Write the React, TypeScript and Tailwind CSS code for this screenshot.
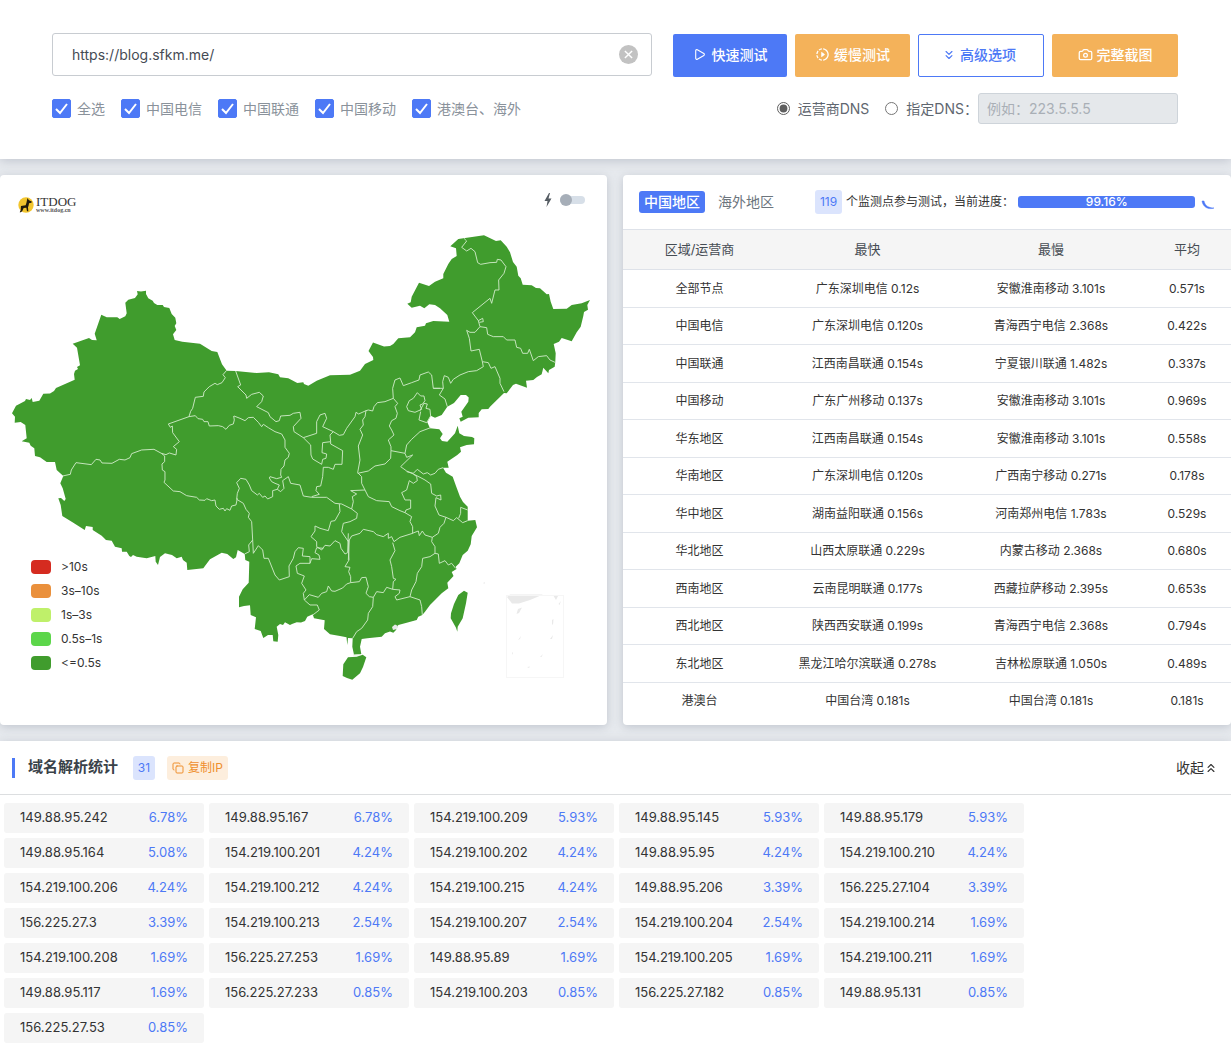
import React, { useState } from 'react';
import { Camera, ChevronsDown, ChevronsUp, Copy, Play } from 'lucide-react';
import { MdOutlineSlowMotionVideo } from 'react-icons/md';
import { clsx } from 'clsx';

// =============================================================================
// DATA
// =============================================================================

interface SpeedRow {
  area: string;
  fastest: string;
  slowest: string;
  average: string;
}

const LINES = ['全选', '中国电信', '中国联通', '中国移动', '港澳台、海外'];

const SPEED_ROWS: SpeedRow[] = [
  { area: '全部节点', fastest: '广东深圳电信 0.12s', slowest: '安徽淮南移动 3.101s', average: '0.571s' },
  { area: '中国电信', fastest: '广东深圳电信 0.120s', slowest: '青海西宁电信 2.368s', average: '0.422s' },
  { area: '中国联通', fastest: '江西南昌联通 0.154s', slowest: '宁夏银川联通 1.482s', average: '0.337s' },
  { area: '中国移动', fastest: '广东广州移动 0.137s', slowest: '安徽淮南移动 3.101s', average: '0.969s' },
  { area: '华东地区', fastest: '江西南昌联通 0.154s', slowest: '安徽淮南移动 3.101s', average: '0.558s' },
  { area: '华南地区', fastest: '广东深圳电信 0.120s', slowest: '广西南宁移动 0.271s', average: '0.178s' },
  { area: '华中地区', fastest: '湖南益阳联通 0.156s', slowest: '河南郑州电信 1.783s', average: '0.529s' },
  { area: '华北地区', fastest: '山西太原联通 0.229s', slowest: '内蒙古移动 2.368s', average: '0.680s' },
  { area: '西南地区', fastest: '云南昆明联通 0.177s', slowest: '西藏拉萨移动 2.395s', average: '0.653s' },
  { area: '西北地区', fastest: '陕西西安联通 0.199s', slowest: '青海西宁电信 2.368s', average: '0.794s' },
  { area: '东北地区', fastest: '黑龙江哈尔滨联通 0.278s', slowest: '吉林松原联通 1.050s', average: '0.489s' },
  { area: '港澳台', fastest: '中国台湾 0.181s', slowest: '中国台湾 0.181s', average: '0.181s' },
];

const IP_STATS: [string, string][] = [
  ['149.88.95.242', '6.78%'], ['149.88.95.167', '6.78%'], ['154.219.100.209', '5.93%'], ['149.88.95.145', '5.93%'], ['149.88.95.179', '5.93%'],
  ['149.88.95.164', '5.08%'], ['154.219.100.201', '4.24%'], ['154.219.100.202', '4.24%'], ['149.88.95.95', '4.24%'], ['154.219.100.210', '4.24%'],
  ['154.219.100.206', '4.24%'], ['154.219.100.212', '4.24%'], ['154.219.100.215', '4.24%'], ['149.88.95.206', '3.39%'], ['156.225.27.104', '3.39%'],
  ['156.225.27.3', '3.39%'], ['154.219.100.213', '2.54%'], ['154.219.100.207', '2.54%'], ['154.219.100.204', '2.54%'], ['154.219.100.214', '1.69%'],
  ['154.219.100.208', '1.69%'], ['156.225.27.253', '1.69%'], ['149.88.95.89', '1.69%'], ['154.219.100.205', '1.69%'], ['154.219.100.211', '1.69%'],
  ['149.88.95.117', '1.69%'], ['156.225.27.233', '0.85%'], ['154.219.100.203', '0.85%'], ['156.225.27.182', '0.85%'], ['149.88.95.131', '0.85%'],
  ['156.225.27.53', '0.85%'],
];

const LEGEND = [
  { label: '>10s', color: 'bg-[#d52b20]' },
  { label: '3s–10s', color: 'bg-[#ea903c]' },
  { label: '1s–3s', color: 'bg-[#bff06a]' },
  { label: '0.5s–1s', color: 'bg-[#5cd64a]' },
  { label: '<=0.5s', color: 'bg-[#409c2d]' },
];

// =============================================================================
// MAP
// =============================================================================

const MAINLAND =
  '12,413.3 16,405.7 25,401 26,399 30,400 31.7,398 32.7,402 39.3,400.7 43.3,393.7 50,393.5 54,391 56,388 74.7,379.7 74,374 75,370.7 78,369 77,367 80,365.3 77,347.7 72.7,343.7 89,338 92,340 96.7,340.3 94.7,333.7 101.3,314.7 106.7,317.3 117.3,317.3 119.7,319 125.3,316.3 126.7,313.3 125.3,302.7 128.3,299.7 135,298 137.7,294.3 137,291 141,291.5 146,290.7 146,294 148.3,298.3 152.7,300.7 154,303 157.3,305 162.7,305 164,307 169.3,308 171.7,314 175.3,317.7 176.3,323.3 174.7,326 176.3,330 173,334.3 174.7,340 182.3,341.7 200,343.7 211.7,351 217.3,352 222,364.3 226.7,370.7 235.7,371 256.7,373 269,372.3 278.3,374.3 280,377.3 288.3,378.3 297.3,383 303.3,382.3 304,384 308.3,385.7 316.7,380.7 330,375.3 350,374.7 360,370.7 365,364 373.3,360 373,357 368.5,351 373,342.5 384,346.5 390,346 393.3,344 398.3,338.3 410,337.3 415,332.3 416.7,327.3 425,325.7 426,323.3 433.3,321 449.3,321.7 447.3,315 440,308.3 435,305 429.3,304.3 424.3,308.3 420,305.7 411.7,307.7 407.3,303.7 410.7,302.3 411.7,296.7 419,282.7 429,286 435,281.7 443.3,278.3 443.3,274 448.3,264 451.7,259 456.7,256 456,248.3 450.3,246.3 458.3,239 484,235.3 496,241 500.7,240.3 506.7,246.7 510,252.3 513,262 516.7,266.7 518.3,275.7 520.7,278.3 522.7,284.7 531.7,285.3 536,288 540,288.3 546.7,294.3 549,294 550.7,301.7 553.3,309 566.7,308.7 571.7,305 581.7,303.3 590,300 587.3,305 588,309.7 584,312 583.3,316 580.7,326.7 576.7,332.3 571.7,341.3 561.7,338 559,341.7 553.7,344 555.7,353.3 555.3,361.7 554.7,366.7 549,370 548.3,373.3 543.3,367.7 541.7,374.3 537,377 533.3,380 526,380.7 527,387.7 516,383.7 513,385 506.7,393.3 504,393 490,406.7 488.3,409 481.7,409.3 478.7,413 478.7,417.3 468.3,417.7 460.7,421.7 459.3,418.3 462.7,416.7 461.3,411.7 468.3,401.7 468.7,397.5 466,395 460.7,395 454,403 447.3,406.7 441.7,415 435,417.7 430.7,415.7 427.3,422.3 430,428.3 439.3,429.3 442.7,434 440,438.3 442,441 447.3,441.7 455,433.3 457.7,425.7 459.3,433.3 464,436 472,437 474.3,438.3 474,444.3 466.7,445 460,447.3 461,451.7 457.3,455 447.3,461.7 448.7,467.7 443,467.7 446,472.7 452.7,476.7 456,486 460,496.7 463,502 467.7,506.7 467.7,520.7 475.3,520 477,527.3 471.7,536 470.7,544.3 467.7,550.7 462.7,555 459.3,563.3 455.7,566.7 456.5,569 451.7,572 453.5,576 447.3,582.7 448.3,588.3 441.7,593.3 430,605 425,611.7 422.3,615 418.3,616.7 416.7,620 406.7,622.7 398.3,625 396,630 393.3,632.7 390,631.5 385,633.3 381.7,636.7 367.3,638.3 361.7,639 360,646.7 361.3,654 354,654.7 352.3,646.7 352.7,638.3 348,638 347.3,645 346.5,637.3 340,636 330,634.3 324,629 324.7,620.3 314,618.3 312.7,614.3 307.3,616.7 305,621 301,622.5 296.7,622.3 292,624 290,625 285,622.3 283,625 280,624 276.7,626.7 278.3,635 277.7,641.7 273.3,641.3 272.7,635 268,635 263.3,638 260.7,631 254.7,629 256,617.3 250.7,615 250,605.3 244,606 239,607.3 239,596.7 242.7,589.3 248.7,582.7 249.3,561.7 245.3,560 244.7,554 237.7,550 236,557.3 233.3,559 227.3,554 221.7,552.7 210,559.3 203.3,568.3 187.3,570 186.7,562.7 183,560 181.7,556.7 176.7,558.3 172,555 165,553.3 160,557 158,565 155.7,561.7 155.3,556 146.7,558.3 136.7,556.7 133,555 131,557 129.3,556 126.7,551.7 122,551.7 121.7,548.3 115,546.7 111.7,540.7 106,540 101.7,535.7 92.7,530 92.7,527 86,526 84.7,530 71.7,521.7 62.3,516 60.7,505 58.3,498.3 61,498 64.3,501 65.7,499 62.7,488.3 60.3,483.3 63.3,476 56.7,470 55,462 46.7,462 40,457.3 35,456 34.3,448.3 30.7,445.7 29.3,442.7 21.7,441.3 26.7,438.3 25.3,425 20.7,422 14.7,422.7 15,416.7';

const HAINAN = '343.3,664.3 348,657.3 356.7,656.7 362.7,654.7 366.3,657.3 363,667 360,673.3 352.3,679.7 347,678 342.7,676';

const TAIWAN = '451,613.3 454,604 458.3,595 464,590.7 467.7,592.7 466,603.3 462.7,618.3 457.7,626.7 457.3,631.7 456,627.7 450.7,618.3';

// Province borders, drawn at three times the map scale from each group's origin
const BORDERS = [
  {
    origin: 'translate(0 280) scale(0.3333)',
    lines: [
      '680,271 669,284 676,293 666,308 652,314 645,310 628,320 612,336 610,349 586,352 578,385 572,394 567,410',
      '567,410 505,432 511,442 517,438 518,458 538,485 520,500 530,508 528,525 508,519 498,524 484,520 462,508 425,510 395,521 390,533 375,540 358,538 336,550 306,549 300,540 288,538 274,554 228,548 214,570 211,583 188,588',
      '567,410 586,407 594,416 608,418 612,425 624,425 628,438 655,437 668,440 678,448 688,436 700,432 703,420 701,408',
      '484,520 494,528 494,545 486,552 487,570 495,575 495,600',
    ],
  },
  {
    origin: 'translate(30 450) scale(0.3333)',
    lines: [
      '405,90 402,97 430,123 450,125 470,137 500,142 508,150 525,151 530,146 545,152 555,150 558,168 568,178 580,175 585,183 590,176 600,181 605,168 618,165 622,145',
    ],
  },
  {
    origin: 'translate(220 360) scale(0.3333)',
    lines: [
      '42,168 60,175 75,182 85,173 100,172 115,187 125,200 130,193 145,203 165,215 185,222 195,240 195,262 208,280 205,292 195,300 192,318 183,328 182,345 185,352 170,356 150,350 148,354 155,365 165,370 178,375 172,388 158,392 158,410 143,417 135,408 128,412 118,400 112,405 95,392 88,375 78,358 62,355 50,368 58,385 52,400 50,418',
      '50,418 70,430 78,448 88,460 85,472 95,485 98,540 100,580',
      '47,33 62,75 53,80 78,105 80,115 95,103 118,97 130,108 125,125 110,140 145,158 150,170 168,185 178,182 182,168 210,166 220,160 240,157 243,175 220,200 222,215 250,233',
      '250,233 290,220 290,185 300,165 315,160 320,175 308,200 340,215 330,225 332,245 308,248 306,278 320,282 318,295 308,298 305,313 278,297 273,285 272,255 250,233',
      '340,215 358,226 370,224 380,205 405,170 408,157 416,162 438,152',
      '332,245 332,252 368,272 366,313 345,313 340,328 325,322 310,322 308,350 302,378 290,380 288,392 298,403 275,410',
      '172,388 182,395 192,385 188,362 205,350 212,370 240,375 250,408 275,412 320,412 345,430 365,432',
      '438,152 435,170 428,180 430,195 420,208 428,225 415,258 420,300 413,338',
      '438,152 445,150 458,153 462,140 472,128 495,125 520,115',
      '520,115 533,130 525,140 532,160 528,175 515,182 508,198 515,210 522,225 505,240 513,260 513,272',
      '513,272 512,295 495,312 465,318 445,333 413,340',
      '513,272 555,280 560,255 575,238 600,215 632,203',
      '555,280 560,292 578,285 542,320 560,333 580,342',
      '413,338 425,350 425,370 435,390 445,410 470,422 508,425 515,440 540,452 555,458',
      '435,390 392,392 410,402 397,410 400,425 395,447',
      '365,432 395,447 412,460 410,475 390,485 370,490 365,515 385,545',
      '358,432 360,455 345,482 333,484 325,512 300,505 285,498 285,513 273,530 290,545 290,560 305,570 315,556 330,558 345,542 360,550 363,565 375,582 383,578 385,520',
      '520,115 518,85 525,60 540,54 550,77 575,68 597,60 600,45 625,36 635,45 640,85 660,85',
      '560,140 568,122 580,115 592,98 602,108 612,108 615,122 608,132 600,135 605,148 585,157 565,152 560,140',
      '600,152 612,130 622,132 618,145 630,148 632,168 620,188 597,180 602,155',
      '555,458 575,470 570,485 578,500 578,520',
      '580,342 590,350 592,362 580,370 568,362 560,390 545,398 555,420 572,420 572,445 558,450 555,458',
      '385,600 388,540 395,528 420,520 430,508 460,515 470,524 490,530 505,520 505,535 515,530 522,545 540,532 578,520',
    ],
  },
  {
    origin: 'translate(390 225) scale(0.3333)',
    lines: [
      '222,40 230,48 215,67 230,78 243,70 255,80 263,113 272,118 300,113 320,112 322,103 333,105 348,125 342,145 326,165 327,195 315,195 305,235 300,220 247,263 265,287 270,305',
      '265,287 278,280 280,290 268,292',
      '270,305 255,322 240,322 230,316 238,340 243,378 268,373 277,410',
      '270,305 290,308 293,328 310,335 340,335 350,345 375,345 380,367 392,370 398,385 413,385 418,373 430,407 445,395 470,392 480,405 495,412',
      '277,410 295,413 303,430 315,425 330,460 330,475 342,500',
      '277,410 280,425 260,437 235,440 210,450 190,463 182,475 175,457 163,452 158,470 160,490 148,510 165,522 172,545',
      '130,490 160,490',
    ],
  },
  {
    origin: 'translate(340 400) scale(0.3333)',
    lines: [
      '200,215 220,220 232,208 250,222 262,218 272,225 285,220 295,208 309,203',
      '220,222 240,232 255,240 272,252 275,280 290,288 302,285 303,300 288,293 285,318 297,345 318,352',
      '318,352 340,362 350,353 368,368 383,362',
      '356,355 362,340 362,322 383,330',
      '318,352 312,370 300,382 295,400 277,412',
      '217,400 235,393 238,407 247,393 255,405 277,412 275,425 285,440 285,460',
      '285,460 295,462 298,490 315,482 325,495 335,490 347,505',
      '285,460 270,470 248,475 245,500 232,520 228,545 215,570 210,590',
      '210,590 240,600 245,620 247,645',
      '158,428 165,452 150,480 155,500 160,535 168,538 160,545 158,568',
      '158,568 180,570 178,580 165,590 170,600 210,590',
      '158,568 140,562 130,578 110,575 100,592',
      '100,592 98,620 85,640 83,660 65,685 50,695 38,715',
      '100,592 88,590 78,580 85,560 78,532 65,533 58,545 32,548',
      '25,420 27,480 15,500 30,502 26,515 32,530 32,548',
      '40,765 62,764',
    ],
  },
  {
    origin: 'translate(220 480) scale(0.3333)',
    lines: [
      '392,308 380,312 368,324 345,334 335,333 325,318 320,335 305,340 295,352 268,344 253,360',
      '253,360 270,375 292,375 298,390 285,400 278,405',
      '253,360 250,340 258,330 245,310 253,288 232,280 228,258 240,250 270,250',
      '270,250 275,236 300,238 297,225 285,218 290,203 310,205',
      '100,220 115,197 128,210 132,235 145,235 165,285 178,300 208,290 207,258 220,235 225,215 235,203 250,205 247,228 270,230 270,250',
      '98,180 86,195 88,215 74,222',
    ],
  },
];

function ChinaMap() {
  return (
    <svg viewBox="0 175 607 550" className="block w-full" role="img" aria-label="中国地区">
      <g fill="#409c2d">
        <polygon points={MAINLAND} />
        <polygon points={HAINAN} />
        <polygon points={TAIWAN} />
      </g>
      <g fill="none" stroke="#cdeac6" strokeWidth="2.8" strokeLinejoin="round">
        {BORDERS.map((group) => (
          <g key={group.origin} transform={group.origin}>
            {group.lines.map((points) => (
              <polyline key={points} points={points} />
            ))}
          </g>
        ))}
      </g>
      {/* Hong Kong and the islands inset */}
      <g fill="#e9e9e9">
        <polygon points="392,627 395,624.5 398,626 397,629 393,630" />
        <polygon points="483,583 485,582 484.5,584" />
        <polygon points="507,597 510,594.5 543,594.5 530,600 519,603.5 512,603.5" />
        <polygon points="553,595 558.5,595 556,600" />
        <polygon points="518,609 522,607.5 519,613 516.5,614" />
        <polygon points="552,620 553.5,619 553,625 552,624" />
        <polygon points="550,639 553,635 552,639" />
        <polygon points="518,640 521,636 520,639" />
        <polygon points="512,653 513,652 513,655" />
        <polygon points="540,657 543,654 541.5,657" />
        <polygon points="527,667 530,666.5 529,668" />
        <polygon points="558.5,604 561,601 559.5,605" />
      </g>
      <rect x="506.5" y="595.5" width="57" height="82" fill="none" stroke="#f6f6f6" />
    </svg>
  );
}

function Logo() {
  return (
    <div className="flex items-center gap-[2px]">
      <svg viewBox="0 0 48 48" className="h-4 w-4">
        <circle cx="24" cy="24" r="23" fill="#f2c52e" />
        <path
          d="M29 3l3 6 10 5-2 3-7 2c-1 5-1 8-3 12l1 12h-4l-2-11-8 1-4 9-4 4H5l3-6c1-4 0-8 1-13l14-2c2-5 3-11 4-16z"
          fill="#211b0c"
        />
      </svg>
      <div className="flex flex-col text-[#333]">
        <span className="font-['Liberation_Serif',serif] text-[13px] leading-[12px]">ITDOG</span>
        <span className="font-['Liberation_Serif',serif] text-[6px] leading-[5px] font-bold text-[#555]">www.itdog.cn</span>
      </div>
    </div>
  );
}

// =============================================================================
// FORM
// =============================================================================

function LineCheckbox({ label }: { label: string }) {
  return (
    <label className="flex items-center gap-[6px] text-sm text-[#8a929b]">
      <span className="relative flex">
        <input
          type="checkbox"
          defaultChecked
          className="peer h-[19px] w-[19px] appearance-none rounded-[2px] border border-[#adb5bd] checked:border-[#4d79f6] checked:bg-[#4d79f6]"
        />
        <svg
          viewBox="0 0 19 19"
          className="pointer-events-none absolute inset-0 hidden peer-checked:block"
          fill="none"
          stroke="#fff"
          strokeWidth="2"
        >
          <path d="M4 10l4 4 7-9" />
        </svg>
      </span>
      {label}
    </label>
  );
}

function TestForm() {
  const [url, setUrl] = useState('https://blog.sfkm.me/');
  const [dns, setDns] = useState('isp');

  return (
    <section className="flex bg-white pt-[33px] pr-[53px] pb-[35px] pl-[52px] shadow-[0_2px_10px_rgba(120,130,150,0.35)]">
      <div className="w-[600px] shrink-0">
        <div className="relative">
          <input
            type="text"
            aria-label="URL"
            value={url}
            onChange={(e) => setUrl(e.target.value)}
            className="h-[43px] w-full rounded-[3px] border border-[#c8ccd1] px-[19px] text-sm text-[#454b54] outline-none"
          />
          <button
            type="button"
            aria-label="清除"
            onClick={() => setUrl('')}
            className="absolute top-3 right-[14px] flex h-[19px] w-[19px] items-center justify-center rounded-full bg-[#c2c2c2]"
          >
            <svg viewBox="0 0 10 10" className="h-[9px] w-[9px]" stroke="#fff" strokeWidth="1.6">
              <path d="M1 1l8 8M9 1l-8 8" />
            </svg>
          </button>
        </div>
        <div className="mt-[17px] flex h-[31px] items-center gap-4">
          {LINES.map((line) => (
            <LineCheckbox key={line} label={line} />
          ))}
        </div>
      </div>

      <div className="ml-[21px] min-w-0 flex-1 pt-px">
        <div className="grid grid-cols-[114fr_115fr_126fr_126fr] gap-2 text-sm font-medium whitespace-nowrap">
          <button type="button" className="flex h-[43px] items-center justify-center gap-[6px] rounded-[2px] bg-[#4d79f6] pb-[2px] text-white">
            <Play size={13} strokeWidth={2} />
            快速测试
          </button>
          <button type="button" className="flex h-[43px] items-center justify-center gap-1 rounded-[2px] bg-[#f4b25a] pb-[2px] text-white">
            <MdOutlineSlowMotionVideo size={15} />
            缓慢测试
          </button>
          <button type="button" className="flex h-[43px] items-center justify-center gap-1 rounded-[2px] border border-[#4d79f6] bg-white pr-1 pb-[2px] text-[#4d79f6]">
            <ChevronsDown size={14} strokeWidth={2} />
            高级选项
          </button>
          <button type="button" className="flex h-[43px] items-center justify-center gap-1 rounded-[2px] bg-[#f4b25a] pb-[2px] text-white">
            <Camera size={15} strokeWidth={2} />
            完整截图
          </button>
        </div>
        <div className="mt-4 flex items-center justify-end text-sm text-[#5f6770]">
          <label className="flex items-center gap-2">
            <input type="radio" name="dns" className="h-[13px] w-[13px] accent-[#5f5f5f]" checked={dns === 'isp'} onChange={() => setDns('isp')} />
            运营商DNS
          </label>
          <label className="ml-4 flex items-center gap-2">
            <input type="radio" name="dns" className="h-[13px] w-[13px] accent-[#5f5f5f]" checked={dns === 'custom'} onChange={() => setDns('custom')} />
            指定DNS：
          </label>
          <input
            type="text"
            aria-label="指定DNS"
            disabled={dns !== 'custom'}
            placeholder="例如：223.5.5.5"
            className="h-[31px] w-[200px] rounded-[3px] border border-[#ced4da] bg-[#e5e8eb] px-2 text-sm placeholder:text-[#a9afb6]"
          />
        </div>
      </div>
    </section>
  );
}

// =============================================================================
// RESULT PANELS
// =============================================================================

const CARD = 'bg-white shadow-[0_2px_10px_rgba(120,130,150,0.35)]';

function MapPanel() {
  return (
    <section className={clsx(CARD, 'relative min-w-0 flex-[607] overflow-hidden rounded')}>
      <ChinaMap />
      <div className="absolute top-[21px] left-[18px]">
        <Logo />
      </div>
      <label className="absolute top-[18px] right-[22px] flex items-center gap-2">
        <svg viewBox="0 0 8 14" className="h-[14px] w-2" fill="#555c63">
          <path d="M5 0L0.5 8H3.5L2.5 14L7.5 5.5H4.5L6 0Z" />
        </svg>
        <input
          type="checkbox"
          aria-label="动画"
          className="relative h-2 w-[25px] appearance-none rounded-full bg-[#d7dfe8] before:absolute before:-top-[2px] before:left-0 before:h-3 before:w-3 before:rounded-full before:bg-[#a6aeb8] before:content-['']"
        />
      </label>
      <ul className="absolute bottom-[50px] left-[31px] text-xs text-[#333]">
        {LEGEND.map(({ label, color }) => (
          <li key={label} className="flex h-6 items-center gap-[10px]">
            <span className={clsx('h-[14px] w-5 rounded', color)} />
            {label}
          </li>
        ))}
      </ul>
    </section>
  );
}

function SpeedPanel() {
  return (
    <section className={clsx(CARD, 'min-w-0 flex-[608] overflow-hidden rounded')}>
      <div className="flex h-[54px] items-center pr-[14px] pl-4 whitespace-nowrap">
        <button type="button" className="h-[22px] rounded-[3px] bg-[#4d79f6] px-[5px] text-sm leading-[22px] font-medium text-white">
          中国地区
        </button>
        <button type="button" className="ml-[13px] text-sm text-[#6c757d]">
          海外地区
        </button>
        <span className="ml-[41px] flex h-6 w-[27px] items-center justify-center rounded-[3px] bg-[#dbe4fd] text-xs text-[#4d79f6]">119</span>
        <span className="ml-1 text-xs text-[#333]">个监测点参与测试，当前进度：</span>
        <div className="ml-1 flex-1">
          <div
            role="progressbar"
            aria-valuenow={99.16}
            className="flex h-3 items-center justify-center rounded-[3px] bg-[#4d79f6] text-xs font-medium text-white"
            style={{ width: '99.16%' }}
          >
            99.16%
          </div>
        </div>
        <svg viewBox="0 0 16 16" className="ml-1 h-4 w-4" fill="none">
          <path d="M1 7c1 6 6 9 12 7c-5 0-9-2-10-7z" fill="#4d79f6" stroke="#4d79f6" strokeWidth="0.5" />
        </svg>
      </div>
      <table className="w-full table-fixed text-center text-xs text-[#333]">
        <thead>
          <tr className="h-10 border-y border-[#dee2e9] bg-[#f5f5f5] text-[13px] text-[#454c53]">
            <th className="w-[153px] font-normal">区域/运营商</th>
            <th className="w-[183px] font-normal">最快</th>
            <th className="w-[184px] font-normal">最慢</th>
            <th className="font-normal">平均</th>
          </tr>
        </thead>
        <tbody>
          {SPEED_ROWS.map((row) => (
            <tr key={row.area} className="border-b border-[#e1e5eb] last:border-b-0 odd:h-[38px] even:h-[37px]">
              <td>{row.area}</td>
              <td>{row.fastest}</td>
              <td>{row.slowest}</td>
              <td>{row.average}</td>
            </tr>
          ))}
        </tbody>
      </table>
    </section>
  );
}

function IpPanel() {
  return (
    <section className={clsx(CARD, 'grow')}>
      <header className="flex h-[54px] items-center border-b border-[#dcdee0] pr-[13px] pl-3">
        <span className="h-5 w-[3px] bg-[#4d79f6]" />
        <h2 className="ml-[13px] text-[15px] font-bold text-[#3a4249]">域名解析统计</h2>
        <span className="ml-[15px] flex h-6 w-[22px] items-center justify-center rounded-[3px] bg-[#dbe4fd] text-xs text-[#4d79f6]">31</span>
        <button type="button" className="ml-3 flex h-6 items-center gap-1 rounded-[3px] bg-[#fdeedd] px-[5px] text-xs text-[#ef8f2d]">
          <Copy size={12} strokeWidth={2} />
          复制IP
        </button>
        <button type="button" className="ml-auto flex items-center text-sm text-[#333]">
          收起
          <ChevronsUp size={14} strokeWidth={2} />
        </button>
      </header>
      <ul className="grid grid-cols-[repeat(5,200px)] gap-[5px] px-1 py-2 text-[13px]">
        {IP_STATS.map(([ip, share]) => (
          <li key={ip} className="flex h-[30px] items-center justify-between rounded-[3px] bg-[#f5f5f5] px-4">
            <span className="text-[#333]">{ip}</span>
            <span className="text-[#4d79f6]">{share}</span>
          </li>
        ))}
      </ul>
    </section>
  );
}

export default function App() {
  return (
    <main className="flex min-h-screen flex-col gap-4 bg-[#e7eaee] font-['Inter','Noto_Sans_CJK_SC',sans-serif]">
      <TestForm />
      <div className="flex gap-4">
        <MapPanel />
        <SpeedPanel />
      </div>
      <IpPanel />
    </main>
  );
}
